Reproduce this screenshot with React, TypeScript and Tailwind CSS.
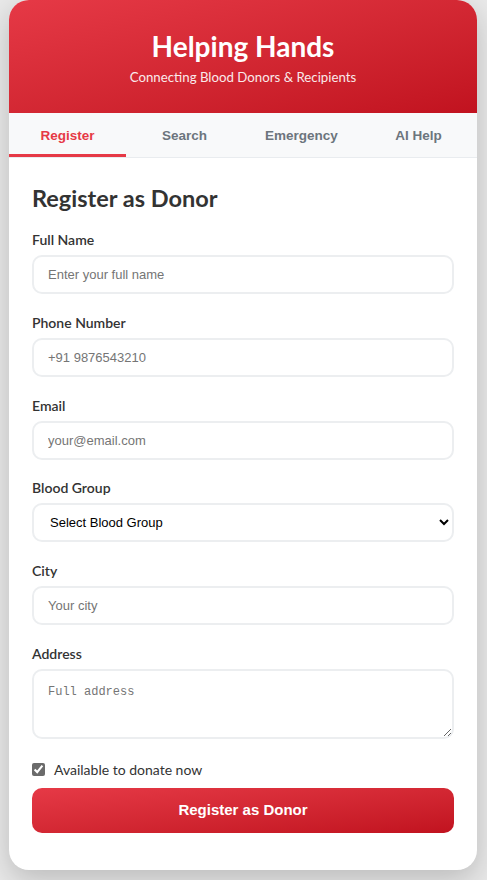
import { useState } from 'react';

const tabs = ['Register', 'Search', 'Emergency', 'AI Help'];

const sans = 'font-["Segoe_UI",Lato,"Noto_Sans",sans-serif]';

function Field({ label, children, last }: { label: string; children: React.ReactNode; last?: boolean }) {
  return (
    <div className={last ? 'mb-[20px]' : 'mb-[18.75px]'}>
      <label className="block text-[14px] leading-[19px] font-semibold text-[#333] mb-[6px]">{label}</label>
      {children}
    </div>
  );
}

const inputCls =
  'block w-full h-[39px] px-[14px] rounded-[10px] border-2 border-[#eceef0] bg-white text-[13px] text-[#333] placeholder:text-[#757575] font-["Liberation_Sans",Arial,sans-serif] outline-none';

export default function App() {
  const [active, setActive] = useState('Register');
  const [available, setAvailable] = useState(true);

  return (
    <div className={`min-h-screen bg-[#e9e9e9] pl-[9px] pr-[10px] ${sans}`}>
      <div className="w-full bg-white rounded-[20px] overflow-hidden shadow-[0_10px_30px_rgba(0,0,0,0.2)]">
        <div className="h-[113px] bg-linear-to-br from-[#e63946] to-[#c1121f] flex flex-col items-center pt-[30px] text-white">
          <h1 className="text-[28px] leading-[32px] font-bold">Helping Hands</h1>
          <p className="text-[13.25px] leading-[18px] mt-[6px] opacity-90">Connecting Blood Donors &amp; Recipients</p>
        </div>

        <div className="flex bg-[#f8f9fa] border-b border-[#e9ecef] font-['Liberation_Sans',Arial,sans-serif]">
          {tabs.map((t) => (
            <button
              key={t}
              onClick={() => setActive(t)}
              className={`flex-1 h-[44px] text-[13.5px] font-bold border-b-[3px] pt-[5px] ${
                active === t ? 'text-[#e63946] border-[#e63946]' : 'text-[#6c757d] border-transparent'
              }`}
            >
              {t}
            </button>
          ))}
        </div>

        <div className="px-[23px] pt-[26px] pb-[37px]">
          <h2 className="text-[23.5px] leading-[28px] font-bold text-[#333] mb-[18px]">Register as Donor</h2>

          <Field label="Full Name">
            <input className={inputCls} placeholder="Enter your full name" />
          </Field>
          <Field label="Phone Number">
            <input className={inputCls} placeholder="+91 9876543210" />
          </Field>
          <Field label="Email">
            <input className={inputCls} placeholder="your@email.com" />
          </Field>
          <Field label="Blood Group">
            <select className={`${inputCls} appearance-auto text-black pl-[12px] pr-[10px]`} defaultValue="">
              <option value="">Select Blood Group</option>
              <option>A+</option>
              <option>A-</option>
              <option>B+</option>
              <option>B-</option>
              <option>O+</option>
              <option>O-</option>
              <option>AB+</option>
              <option>AB-</option>
            </select>
          </Field>
          <Field label="City">
            <input className={inputCls} placeholder="Your city" />
          </Field>
          <Field label="Address" last>
            <textarea
              className="block w-full h-[70px] px-[14px] pt-[13px] pb-[10px] rounded-[10px] border-2 border-[#eceef0] bg-white text-[12px] leading-[16px] font-['Liberation_Mono',monospace] text-[#333] placeholder:text-[#757575] outline-none resize-y"
              placeholder="Full address"
            />
          </Field>

          <label className="flex items-center gap-[9px] text-[14px] text-[#333] h-[22px]">
            <input
              type="checkbox"
              checked={available}
              onChange={(e) => setAvailable(e.target.checked)}
              className="w-[13px] h-[13px] accent-[#6b6b6b] m-0"
            />
            Available to donate now
          </label>

          <button className="mt-[7px] w-full h-[45px] rounded-[10px] bg-linear-to-br from-[#e63946] to-[#c1121f] text-white text-[15px] font-bold font-['Liberation_Sans',Arial,sans-serif]">
            Register as Donor
          </button>
        </div>
      </div>
    </div>
  );
}
